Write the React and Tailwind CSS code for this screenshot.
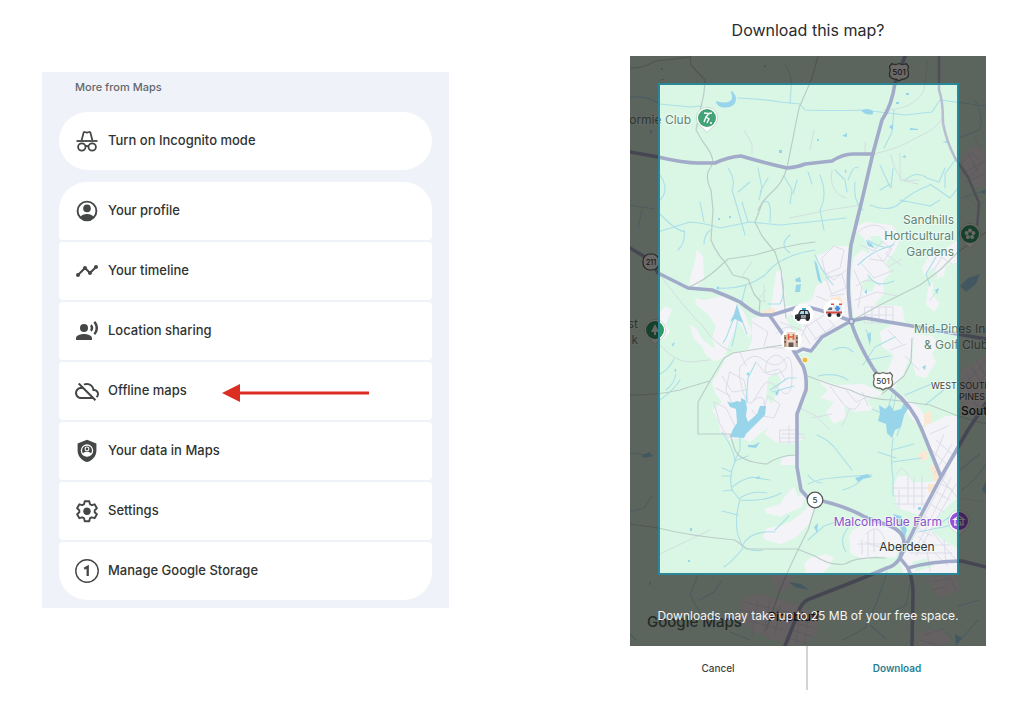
import React from "react";
import { MdTimeline, MdRecordVoiceOver, MdOutlineCloudOff } from "react-icons/md";

const ICON = "block size-6 shrink-0 text-[#444746]";

function IncognitoIcon() {
  return (
    <svg viewBox="0 0 24 24" className={ICON} fill="none" stroke="currentColor" strokeWidth="1.8" aria-hidden="true">
      <path d="M6.600 11.400 8.600 3.600c.2-.6.7-.8 1.200-.6l2.200.7 2.200-.7c.5-.2 1 0 1.200.6l2 7.800" strokeLinejoin="round" />
      <path d="M1.500 12h21" />
      <circle cx="6.800" cy="18" r="3.700" />
      <circle cx="17.200" cy="18" r="3.700" />
      <path d="M10.400 17.600c1-.9 2.200-.9 3.200 0" />
    </svg>
  );
}

function ProfileIcon() {
  return (
    <svg viewBox="0 0 24 24" className={ICON} fill="currentColor" aria-hidden="true">
      <circle cx="12" cy="12" r="9.400" fill="none" stroke="currentColor" strokeWidth="1.900" />
      <circle cx="12" cy="9.400" r="3.800" />
      <path d="M5 17.900c1.600-2 4.200-3 7-3s5.400 1 7 3A9.200 9.200 0 0 1 12 21.500 9.200 9.200 0 0 1 5 17.900Z" />
    </svg>
  );
}

function ShieldIcon() {
  return (
    <svg viewBox="0 0 24 24" className={ICON} aria-hidden="true">
      <path d="M12 .8 2.600 4.400v7c0 5.400 4 10.200 9.400 11.600 5.400-1.400 9.400-6.200 9.400-11.600v-7Z" fill="currentColor" />
      <circle cx="12" cy="11.600" r="5.600" fill="none" stroke="white" strokeWidth="1.300" />
      <circle cx="12" cy="9.900" r="1.900" fill="none" stroke="white" strokeWidth="1.100" />
      <path d="M7.600 14.800c1.200-1.400 2.700-2 4.400-2s3.200.6 4.400 2c-1.200 1.600-2.700 2.400-4.400 2.400s-3.200-.8-4.400-2.400Z" fill="white" />
    </svg>
  );
}

function SettingsIcon() {
  return (
    <svg viewBox="0 0 24 24" className={ICON} aria-hidden="true">
      <path
        d="M9.700 2.200h4.600l.6 2.900 1.900 1.100 2.800-.9 2.300 4-2.200 1.900v2.100l2.200 1.900-2.300 4-2.800-.9-1.900 1.100-.6 2.900H9.700l-.6-2.900-1.900-1.100-2.800.9-2.300-4 2.200-1.900v-2.100L2.100 9.300l2.300-4 2.800.9 1.900-1.100Z"
        fill="none"
        stroke="currentColor"
        strokeWidth="1.900"
        strokeLinejoin="round"
      />
      <circle cx="12" cy="12.200" r="3.700" fill="currentColor" />
    </svg>
  );
}

function StorageIcon() {
  return (
    <svg viewBox="0 0 24 24" className={ICON} fill="none" stroke="currentColor" aria-hidden="true">
      <circle cx="12" cy="12" r="11.200" strokeWidth="1.400" />
      <path d="M9.200 9.700 12.700 7.700V17" strokeWidth="2.300" />
    </svg>
  );
}

const rows = [
  { label: "Your profile", icon: <ProfileIcon /> },
  { label: "Your timeline", icon: <MdTimeline className={ICON} aria-hidden="true" /> },
  { label: "Location sharing", icon: <MdRecordVoiceOver className={ICON} aria-hidden="true" /> },
  { label: "Offline maps", icon: <MdOutlineCloudOff className={ICON} aria-hidden="true" />, pointed: true },
  { label: "Your data in Maps", icon: <ShieldIcon /> },
  { label: "Settings", icon: <SettingsIcon /> },
  { label: "Manage Google Storage", icon: <StorageIcon /> },
];

function Row({ icon, label, pointed, shape }) {
  return (
    <button
      type="button"
      className={`relative flex h-[58px] w-full items-center gap-[9px] bg-white px-4 text-left text-[13px] font-medium text-[#303331] ${shape}`}
    >
      {icon}
      <span>{label}</span>
      {pointed && (
        <svg viewBox="0 0 147 18" className="absolute left-[163px] top-[22px] h-[18px] w-[147px]" aria-hidden="true">
          <path d="M0 9 18 0v18Z" fill="#dc2d22" />
          <path d="M17 9h130" stroke="#dc2d22" strokeWidth="3" />
        </svg>
      )}
    </button>
  );
}

const urban = [
  "M697 249l6 8 1 22-7 8-8-1 2-12 3-8Z",
  "M695 298 704 300 722 296 736 303 744 312 752 333 748 338 739 322 728 346 726 354 716 350 712 338 716 326 708 314 697 306Z",
  "M689 324l8 5 5 10 10 8 10 4 4 6-12 4-8-6-4-8-8-8Z",
  "M752 318 770 316 776 272 782 270 786 306 800 305 851 320 825 337 812 352 796 354 804 366 806 398 797 415 797 436 805 438 797 442 797 465 780 465 782 458 797 455 796 444 776 442 764 434 770 426 750 442 742 438 728 440 720 432 718 420 712 410 722 402 716 395 712 383 722 366 728 355 748 350 752 340Z",
  "M658 314l8-8 6 4-6 14 4 8-8 8-4-4Z",
  "M764 509l16-5 8-12 6-5 4 10 8-4-4 14-14 6-8 4-14-4Z",
  "M763 536l4-8 14-2 12-6 12-10 8-12 4 4-8 22-14 14-14 6-16-4Z",
  "M816 256 826 252 834 246 848 246 849 318 834 322 810 312 800 304 812 300 816 286 830 278 820 268Z",
  "M852 228 866 222 892 225 901 238 894 252 886 262 890 274 883 280 884 294 874 305 902 306 905 322 866 318 853 316 851 284 853 258 862 250 870 254 864 238Z",
  "M922 268 930 254 946 248 958 240 958 262 946 266 944 276 934 280 932 294 940 304 934 312 926 304 928 288Z",
  "M880 332l14-9 20 4-2 24-8 22-12 18-10-8 12-28-12-8Z",
  "M914 334l18 2 8 8-8 10 4 8-10 16-10-2-4-14Z",
  "M816 379 838 385 864 384 884 394 866 400 874 410 854 412 844 406 846 418 834 424 826 412 834 402 820 398 828 390Z",
  "M902 396 920 408 930 425 918 426 908 414Z",
  "M893 486 898 476 908 476 912 482 932 482 938 474 922 428 934 422 946 416 958 416 958 574 904 574 900 562 914 536 922 516 898 508Z",
  "M849 536l4-6 18-8 24 6 8 14-8 16-20-2-8 4-16-6Z",
  "M806 574l-2-10 6-6 16-4 8 4-4 8-8 8Z",
];

const greens = [
  "M768 378l8-6 5 8-3 10-6 14-6-6Z",
  "M862 282l8-6 6 8-4 8-10-2Z",
  "M870 236l10 0 4 8-10 6Z",
  "M936 518 950 504 958 498 958 548 946 542 932 532Z",
  "M928 288l-4-12 8-8 6 8Z",
  "M786 318l12-6 4 16-8 6Z",
  "M912 562l16-4 6 8-18 6Z",
];

const majors = [
  "M905 56 895 83Q892 105 882 120L873 153 862 200 851 245Q847 280 849 300L851 321Q856 340 873 368 882 382 892 390 912 405 922 430L941 477",
  "M630 152 658 157Q684 163 698 163L715 163Q728 157 741 156 765 163 787 168 798 167 805 164L832 161Q843 154 853 154L873 154",
  "M630 248 650 260 658 273 688 288Q700 289 712 290 732 298 740 302 756 315 763 315L772 315 798 307 808 307 830 313 851 321 865 318 912 326 986 339",
  "M770 316 782 333 795 353 803 366Q807 375 806 390L797 414 797 467 801 490 808 498Q842 504 865 517L890 526Q903 531 904 542L900 558",
  "M795 353 803 349 811 351 822 337 851 321",
  "M986 403 968 430 941 477 920 517 900 558Q895 566 887 568L858 580 812 598Q804 600 800 608L785 646",
  "M900 558 908 568Q913 580 913 592L912 646",
  "M908 568Q932 561 962 561L986 567",
];

const middles = [
  "M939 56 939 90Q943 100 943 123 946 140 955 158L968 177 979 203 977 228 970 240",
];

const minors = [
  "M690 56 691 65 705 80 704 93 696 130 703 142Q713 154 713 163L708 172Q706 180 711 190L713 210 711 240Q716 253 725 262L733 275 748 279 754 294 760 301 759 314",
  "M818 56 812 78 799 108 787 168Q782 184 772 192 763 200 758 210",
  "M630 68Q645 68 655 61 668 60 690 57",
  "M763 201 755 222 762 236 775 252 781 270 784 300 786 318",
  "M689 287Q705 280 716 270L728 259 755 255 780 248 800 244 815 242",
  "M630 395Q658 395 680 390 702 383 710 381L724 358 733 353 795 343",
  "M710 381 698 402 698 434 730 434 735 450Q740 462 767 464 780 455 796 455",
  "M630 524 658 528Q690 536 735 540L747 549 797 549 815 556Q830 566 845 564 858 556 885 558",
  "M815 507 808 530Q790 565 780 590L766 630",
  "M805 375Q830 385 850 390 870 400 892 400L930 405 958 416 986 424",
  "M912 338 911 362 904 376 882 394",
  "M851 321 880 305 920 285 940 270 958 252 986 232",
];

const faint = [
  "M660 275Q690 315 702 325 715 345 731 351",
  "M660 345Q675 362 690 362L710 360",
  "M874 154Q900 148 912 140L928 132Q940 124 942 118",
  "M900 153 900 180 918 184",
  "M862 205 828 210 790 218",
  "M940 477 958 498 986 502",
  "M744 130l8 14 0 10M810 150l4-20M865 142v14M891 155q4 20 14 26l14-1M832 170q-4 22 14 28M660 554l50-24M928 60l-4 30q-10 20-40 20",
  "M752 262l-10 14 8 4M766 290l-8 10 8 2M764 285v16",
];

const streets = [
  "M742 365Q752 350 764 360T784 360T792 376 780 390 764 384 754 400 742 388 742 365",
  "M730 372l14 8 4 20-14 8-8-18ZM768 360q8-10 16 0t-8 14-8-14M768 396l12 8-6 14-12-2ZM757 363l8 10 14-4 6 10-10 10M740 352l6 14M714 402l12 6 10 20-8 10-8-14ZM722 376l10 16 14-2M716 388l14 8M754 400q12-8 10 8t-12 2",
  "M776 334q14-14 20 0t-12 14-18-2M752 322l16 10-4 14M780 322l22 8 8 14M790 315l16 12 18-12M806 325l10 14M816 320l12 16M826 316l12 14M812 312l-10 24M834 326l-20 14M844 324l-24 16",
  "M822 258l12-12 10 4-4 18-14 6ZM826 278l16-4 4 14-14 6ZM830 296l14-2M820 268l14 12 12-10M816 296l20 8",
  "M860 245l14 6 8-10 10 8-8 12-14-2M878 255l10 12 14-8M862 264l12 14 20-8M896 240l-10 14 16 12M855 300l22-8 20 4M856 286q14-12 24 0M858 232q16-14 30 0M854 270l8 18-4 20",
  "M865 307h28v16h-28ZM872 307v16M879 307v16M886 307v16M865 315h28",
  "M893 488h36M893 496h32M895 504h30M896 474l6-6 6 6v30M914 478v30M922 476v30M899 490v18M936 440l18 16M930 448l18 18M930 434l18-8M944 434l-10 24M952 444l-18 30",
  "M946 474l-36 70M951 478l-36 72M956 484l-40 72M936 492l14 8M930 504l14 8M924 516l14 8M918 528l14 8M941 484l12 6",
  "M912 545h38M910 553h42M918 536l30 30M932 532l24 28M866 534q12-12 18 4t-18 4M862 540v14M868 532v24M874 530v22M858 544h26M926 543l4 28M944 540l2 24",
  "M780 430h16v12h-16ZM782 434h22M789 426v18M780 438h26M800 408l16 8 14 14M812 418l20-4",
  "M846 390l10 12 14-6M840 400q14 18 20 2M850 408l-8 18M862 392l6 14M830 386l12 16",
  "M940 256l12 8M946 250l-12 20M938 290l-8 10M905 356l14 14M888 330l14 14M890 350l16-6",
  "M960 165l12-12 10 10-12 14ZM968 152l10 20M962 174l24-14M966 182l18-8M965 195l10 10 11-3M974 135l6 14",
  "M976 360l10 16M970 365l16 24M966 374l18 26M964 384l14 24M986 360l-22 26M986 374l-20 24",
  "M744 602l44 10M740 610l46 10M738 618l46 12M758 600l-6 36M770 600l-6 32M780 606l-5 28M790 622l24 6M790 630l22 6M788 638l20 6M800 616l-4 26M808 618l-4 26",
  "M934 582l16-4M932 590l14-3M950 578l6 12M925 635l18-6 10 10M920 640l20 6",
];

const streams = [
  "M630 97Q650 96 660 104L690 107 702 106M738 98Q762 99 780 102L800 104 805 110Q840 111 862 110L880 112 905 115 932 112 940 100 986 106",
  "M785 65Q793 75 791 90L790 103",
  "M728 168Q736 180 732 190L738 210 745 235M738 192l12-10M758 168l4 20-3 12M768 178l-8 14M784 176l8 14-2 14M797 180l-4 14M808 172l4 12",
  "M820 175q8 20 0 35l4 20M835 170l10 10 2 12M848 180q6-16 10-12M855 182q-2 20 8 28",
  "M880 165l10 22M893 168l-2 20M880 190l10-6M905 180q12-10 22-2l12 4 6-14M930 185q-20 8-30 18t-30 2M900 200l30 6 10-6M930 184l20 14 8-10M955 160l-10 14 0 14",
  "M660 175Q670 190 660 200M660 214Q675 230 685 232M658 232L690 222Q705 223 720 228L750 222 780 225 810 222 846 218M684 230q2 12-6 20M704 222l-4-20M748 222l-6-20M770 222q2-24-6-20M710 230q-6 6-6 14",
  "M790 235q-12 10 0 18M815 250Q780 255 765 275 745 290 718 288M782 278q4 14-2 26h-12M746 285l-4 16",
  "M734 318l-8 20-3 5M738 318l-4 20-2 8M741 318l6 16",
  "M660 400q14-10 20-20M658 375q10-4 16-16M666 390q8-6 10-16",
  "M722 432Q732 445 735 460L740 450 740 434M736 460Q728 475 732 490L740 500Q734 520 738 535L743 548Q734 560 724 567M732 487Q748 475 757 478L770 480M740 498Q752 490 767 493M740 500Q765 502 781 493M742 546Q750 530 775 532M775 530l14-14M722 468l10 4M722 476h10M722 511l16 4M745 548q10 4 18 2M733 490l-10 1M734 461l14-5",
  "M746 404L748 378 756 362M770 390l18-12 8 0M772 392l22-6",
  "M817 435Q830 440 838 452L852 470M808 475q6 8 14 8M808 484q14-6 24-6l22-2 18-1M843 490q14-4 20-12M893 438Q890 460 893 478L893 495M878 452l18 6M892 450l22-6M892 462l30-4",
  "M863 365l12-18 20-10M868 360l22-4M892 395l-6 20-14-6M896 394l-8 40M905 410l-8 26M848 380q-12-8-30-4M833 350q12-6 20 2M866 330l5 10",
  "M858 265q14-14 30-18M868 240q18 12 26 4M815 255q8 18 18 30M868 275q8 14 26 6M894 110l-2 22-8 16M925 405l20-16M905 395l34-14M940 250l-14 24 4 12",
  "M896 517l8 12 2 10M918 532l40-8M938 525l20-14M962 490q14-10 24-26M960 470q12-10 20-16M975 100q10 20 4 30l-20 8M986 190l-24 8M848 528q-10 12-2 24M808 540l16-14 12-4",
  "M648 455l-18-2M630 512l14-4 8-12M698 575l-8 20 10 18M700 600l14-8 8-12M887 572l-10 30-12 26-22 12M912 575l-6 30-20 10M960 640l18-20M870 625l16 14M636 640l-6-6M980 600l-22 6M750 640l-20-8M630 205l24 4M642 210l-4 18",
];

const ponds = [
  "M716 101q12 4 16-2 0-8-2-6l2-2q6 6 3 12-4 6-14 4-5-2-5-6Z",
  "M861 111q6-4 12 0v3q-6 2-12-3ZM889 127l4-3v6ZM910 128l8 1v1h-8ZM842 136l5-3v4ZM902 157l3-2 1 3ZM942 142l6-1v2ZM779 150h3v3h-3ZM764 65h2v2h-2ZM661 68h2v2h-2ZM661 79h3v1h-3ZM906 93h3v2h-3ZM896 102h3v2h-3ZM845 169l2 3-2 1ZM817 139h2v2h-2ZM653 131l-3 3v-4Z",
  "M737 304l-3 10-4 8 5-3 8 4-3-9Z",
  "M795 279l5-2 1 5h-5ZM796 285l5-1-1 8-5 0ZM716 288l3-2v4ZM718 218h2v2h-2ZM729 216h2v2h-2Z",
  "M727 401l4 2 6-2 4 1 0-4 4 2 2 8-1 8 2 6 9-8 3-8 6 0-1 9-11 11-8 8-2 4-14-1 3-8 4-6-1-14-6-2Z",
  "M748 445l6 0 6-3-4 6-8-1ZM641 456l8-4 4 4-8 2ZM755 478l5-2-1 3ZM775 393l5-4-3 7ZM672 344l3-2-2 5ZM674 371l2-3v4ZM746 374l3-2v4Z",
  "M879 405l6 4 5-4 4 6 7-2 3-6 5 4-5 8-3 12-6 3-3 8-5-5-1-9-8-3 2-8Z",
  "M814 260l3 4 5 20-4-4ZM864 292l3-3v5ZM867 335l4-3-1 14ZM922 367l4-2-1 5ZM855 478l12-4 5 3-9 2-5 3ZM893 514l8 2 6 14-3 8-4-12ZM918 507h3v3h-3ZM935 290l4-2-2 6ZM866 240l6 4 2 4-6-2ZM814 527l4-4-1 10Z",
  "M960 286l8-8 12-4-4 10-10 8ZM980 192l5-2v4ZM789 582l12 2 8 6-14-3ZM955 634l7 4-6 8ZM982 490l4-10v14ZM648 585l3-4v3ZM690 528h2v3h-2ZM688 560h2v2h-2Z",
];

function Strokes({ list, color, width }) {
  return (
    <g fill="none" stroke={color} strokeWidth={width} strokeLinecap="round" strokeLinejoin="round">
      {list.map((d) => (
        <path key={d} d={d} />
      ))}
    </g>
  );
}

function Label({ x, y, size = 12, anchor = "end", fill = "#5f8474", weight = 400, children }) {
  return (
    <text
      x={x}
      y={y}
      fontSize={size}
      textAnchor={anchor}
      fill={fill}
      fontWeight={weight}
      stroke="#f3fbf6"
      strokeWidth="2"
      strokeOpacity=".75"
      paintOrder="stroke"
    >
      {children}
    </text>
  );
}

function Pin({ x, y, color, children }) {
  return (
    <g transform={`translate(${x} ${y})`}>
      <path d="M0 14.500 -5 9.300A10.600 10.600 0 1 1 5 9.300Z" fill="#fff" stroke="#b9cdc2" strokeWidth=".7" />
      <circle r="9" fill={color} />
      {children}
    </g>
  );
}

function UsShield({ x, y }) {
  return (
    <g transform={`translate(${x} ${y})`}>
      <path
        d="M-7-8.500Q-4-6.500 0-8.500 4-6.500 7-8.500L9.500-5.500Q8-2 9.500 1 10 6 5 7 2 7 0 9-2 7-5 7-10 6-9.500 1-8-2-9.500-5.500Z"
        fill="#fff"
        stroke="#6a6c62"
        strokeWidth="1.300"
        strokeLinejoin="round"
      />
      <text y="3" fontSize="8" fontWeight="500" textAnchor="middle" fill="#35383a">501</text>
    </g>
  );
}

function Vehicle({ x, y, police }) {
  return (
    <g transform={`translate(${x} ${y})`}>
      <circle r="10.500" fill="#fff" />
      {police ? (
        <g>
          <path d="M-8 1-5 0-3-4H5L7 0V5H-8Z" fill="#2b3034" />
          <path d="M-3.500 0-2-3H1V0ZM2 0V-3H4.500L5.500 0Z" fill="#a8d8ea" />
          <path d="M-2 1H3V4.500H-2Z" fill="#8f9aa0" />
          <path d="M-1-6H3V-4H-1Z" fill="#3c9fd0" />
        </g>
      ) : (
        <g>
          <path d="M-8 1-5-3H-1V-5H8V5H-8Z" fill="#e3e6ea" />
          <path d="M-8 1.500H8V3.500H-8Z" fill="#d9463f" />
          <path d="M-6.500 0-4.500-2.500H-2V0Z" fill="#59717e" />
          <path d="M2.200-4H4.800V-2.500H6V-.5H4.800V1H2.200V-.5H1V-2.500H2.200Z" fill="#3f8fe0" />
          <path d="M-3-6.500H0V-5H-3ZM5-6.500H8V-5H5Z" fill="#e0483f" />
        </g>
      )}
      <circle cx="-4.500" cy="5" r="2" fill="#24282b" />
      <circle cx="4.500" cy="5" r="2" fill="#24282b" />
    </g>
  );
}

function Hospital() {
  return (
    <g transform="translate(791 340)">
      <circle r="10.500" fill="#fff" />
      <path d="M-7-5H7V7H-7Z" fill="#b79c86" />
      <path d="M-4.500-8H4.500V7H-4.500Z" fill="#ead9c8" />
      <path d="M-2.500-6V0M2.500-6V0M-2.500-3H2.500" stroke="#e2603c" strokeWidth="1.700" />
      <path d="M-6.500-3H-5V-1H-6.500ZM5-3H6.500V-1H5ZM-6.500 1H-5V3H-6.500ZM5 1H6.500V3H5ZM-2.500 2.500H2.500V7H-2.500Z" fill="#6a5750" />
    </g>
  );
}

function MapCanvas() {
  return (
    <svg viewBox="630 56 356 590" className="block h-auto w-full" role="img" aria-label="Map of the selected area">
      <rect x="630" y="56" width="356" height="590" fill="#d9f7e4" />
      <g fill="#f4f4f8">
        {urban.map((d) => (
          <path key={d} d={d} />
        ))}
        <path
          d="M742 598l20-4 28 8 26 12 2 20-24 12-26-8-28-16ZM962 160l10-14 14 4v36l-16 0ZM962 370l24-14v60l-22-10ZM928 578l26-4 6 16-22 8ZM916 634l22-6 14 14-22 4h-12ZM770 575h20l4 10-14 8Z"
          fill="#efebef"
        />
      </g>
      <g fill="#d9f7e4">
        {greens.map((d) => (
          <path key={d} d={d} />
        ))}
      </g>
      <path
        d="M762 311l12-3 2 5-12 3ZM924 414l8-4v12l-8 4ZM918 455l8-6 2 10-8 2ZM930 466l8-2 4 14-8 4ZM928 484l8 0-2 10-6-2ZM830 298l10-2 4 8-10 2ZM806 390l4-2v6Z"
        fill="#fbe8d4"
      />
      <Strokes list={streets} color="#dcdde8" width="1" />
      <Strokes list={faint} color="#d3dfdf" width="1" />
      <Strokes list={streams} color="#acdfe9" width="1.100" />
      <g fill="#98d5ea">
        {ponds.map((d) => (
          <path key={d} d={d} />
        ))}
      </g>
      <Strokes list={minors} color="#bccdc9" width="1.200" />
      <Strokes list={middles} color="#b9bdd2" width="2.500" />
      <Strokes list={majors} color="#a2abc9" width="3.600" />
      <circle cx="851.500" cy="321.500" r="2.500" fill="#d7dced" stroke="#929dc0" strokeWidth="1.500" />
      <circle cx="805" cy="360" r="3" fill="#f2bb3d" stroke="#fff" strokeWidth=".8" />

      <Label x={691} y={124}>ormie Club</Label>
      <Label x={954} y={224}>Sandhills</Label>
      <Label x={954} y={240}>Horticultural</Label>
      <Label x={954} y={256}>Gardens</Label>
      <Label x={914} y={333} anchor="start">Mid-Pines Inn</Label>
      <Label x={924} y={349} anchor="start">&amp; Golf Club</Label>
      <Label x={638} y={328}>st</Label>
      <Label x={638} y={344}>k</Label>
      <Label x={931} y={389} size={9} anchor="start" fill="#3f4446">WEST SOUTH</Label>
      <Label x={959} y={400} size={9} anchor="start" fill="#3f4446">PINES</Label>
      <Label x={961} y={415} anchor="start" fill="#202426" weight={500}>South</Label>
      <Label x={942} y={526} fill="#8c50cf">Malcolm Blue Farm</Label>
      <Label x={907} y={551} anchor="middle" fill="#303437">Aberdeen</Label>
      <text x="794" y="621" fontSize="12" fontWeight="500" textAnchor="middle" fill="#202426">Pinebluff</text>

      <Pin x={707} y={118} color="#43a376">
        <path d="M-3-5 2-4.500-1-1 2 1 0 5M-1-1-3 4M2-4.500 5-5M3 5H5" stroke="#fff" strokeWidth="1.400" fill="none" />
      </Pin>
      <Pin x={655} y={330} color="#2d9b67">
        <path d="M0-6 4 2H1V5H-1V2H-4Z" fill="#fff" />
      </Pin>
      <Pin x={970} y={234} color="#2d9b67">
        <g fill="#fff">
          <circle cy="-3.500" r="2" />
          <circle cx="3.400" cy="-1" r="2" />
          <circle cx="2.100" cy="3" r="2" />
          <circle cx="-2.100" cy="3" r="2" />
          <circle cx="-3.400" cy="-1" r="2" />
        </g>
      </Pin>
      <Pin x={959} y={521} color="#9553dc">
        <path d="M-5-1.500 0-5 5-1.500ZM-4 4V-1M4 4V-1M-5 4H5M-1.500 4V1H1.500V4" stroke="#fff" strokeWidth="1.200" fill="none" />
      </Pin>
      <UsShield x={899} y={72} />
      <UsShield x={883} y={381} />
      <rect x="643" y="254" width="16" height="16" rx="7" fill="#fff" stroke="#55585b" strokeWidth="1.200" />
      <text x="651" y="265" fontSize="7" fontWeight="500" textAnchor="middle" fill="#35383a">211</text>
      <circle cx="815" cy="500" r="7.800" fill="#fff" stroke="#55585b" strokeWidth="1.200" />
      <text x="815" y="503" fontSize="8" fontWeight="500" textAnchor="middle" fill="#35383a">5</text>
      <Vehicle x={803} y={314} police />
      <Vehicle x={834} y={310} />
      <Hospital />

      <path d="M630 56H986V646H630ZM658 83V574H958V83Z" fillRule="evenodd" fill="#080404" fillOpacity=".6" />
      <rect x="659" y="84" width="299" height="490" fill="none" stroke="#2b8797" strokeWidth="2" />
      <text x="647" y="627" fontSize="15" fontWeight="500" fill="#252a27">Google Maps</text>
    </svg>
  );
}

export default function App() {
  return (
    <main className="grid min-h-screen grid-cols-[407fr_181fr_356fr] items-start bg-white pl-[42px] pr-[38px] font-['Inter','Liberation_Sans',sans-serif]">
      <section className="mt-[72px] bg-[#f0f2f9] px-[17px] pb-2" aria-labelledby="more-heading">
        <h2 id="more-heading" className="px-4 pt-[7px] text-[11px] font-medium leading-4 text-[#65686b]">
          More from Maps
        </h2>
        <div className="mt-[17px]">
          <Row icon={<IncognitoIcon />} label="Turn on Incognito mode" shape="rounded-full" />
        </div>
        <div className="mt-3 flex flex-col gap-[2px]">
          {rows.map((row, i) => (
            <Row
              key={row.label}
              {...row}
              shape={
                i === 0
                  ? "rounded-t-[28px] rounded-b-[4px]"
                  : i === rows.length - 1
                    ? "rounded-t-[4px] rounded-b-[28px]"
                    : "rounded-[4px]"
              }
            />
          ))}
        </div>
      </section>

      <section className="col-start-3" aria-labelledby="download-heading">
        <h1 id="download-heading" className="pb-[14px] pt-[18px] text-center text-base font-normal leading-6 text-[#2a2c2e]">
          Download this map?
        </h1>
        <div className="relative">
          <MapCanvas />
          <p className="absolute inset-x-0 bottom-[22px] text-center text-xs font-normal leading-4 text-[#f4f5f4]">
            Downloads may take up to 25 MB of your free space.
          </p>
        </div>
        <div className="grid grid-cols-2 divide-x-2 divide-[#d4d4d6] text-[10px] font-medium">
          <button type="button" className="h-11 text-[#3f4244]">Cancel</button>
          <button type="button" className="h-11 font-semibold text-[#2a7f92]">Download</button>
        </div>
      </section>
    </main>
  );
}
